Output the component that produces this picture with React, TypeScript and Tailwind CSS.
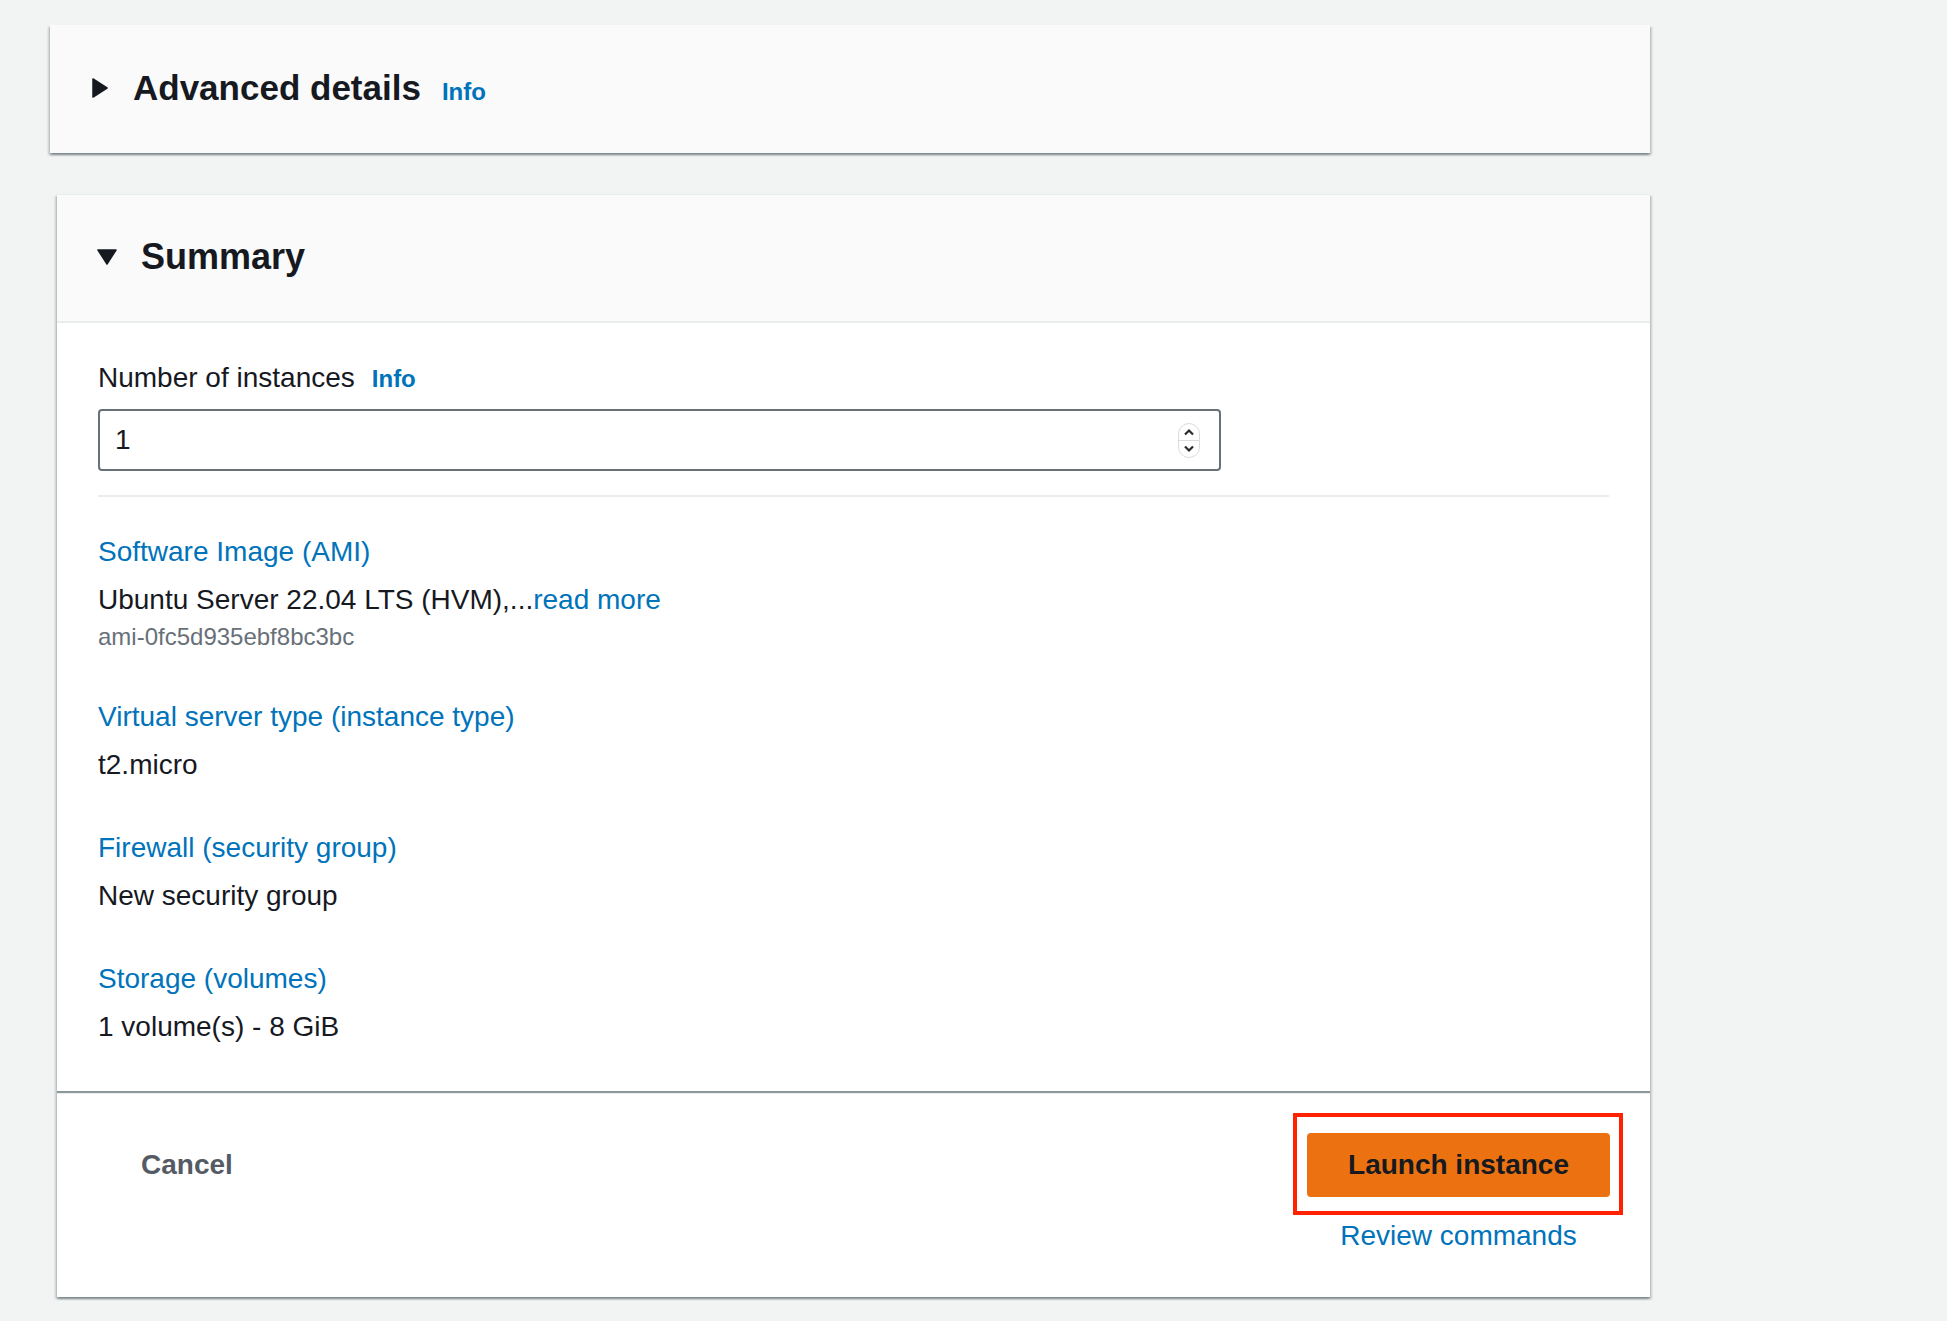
const cardShadow =
  "shadow-[0_2px_2px_0_rgba(0,28,36,0.3),2px_2px_2px_0_rgba(0,28,36,0.15),-2px_2px_2px_0_rgba(0,28,36,0.15)]";

function CaretRight() {
  return (
    <svg width="16" height="20" viewBox="0 0 16 20" className="shrink-0">
      <polygon points="1,1 15,10 1,19" fill="#16191f" stroke="#16191f" strokeWidth="1.5" strokeLinejoin="round" />
    </svg>
  );
}

function CaretDown() {
  return (
    <svg width="20" height="16" viewBox="0 0 20 16" className="shrink-0">
      <polygon points="1,1 19,1 10,15" fill="#16191f" stroke="#16191f" strokeWidth="1.5" strokeLinejoin="round" />
    </svg>
  );
}

function Spinner() {
  return (
    <div className="w-[22px] h-[35px] rounded-[11px] border border-[#dcdcdc] flex flex-col overflow-hidden">
      <div className="flex-1 flex items-center justify-center border-b border-[#dcdcdc]">
        <svg width="12" height="8" viewBox="0 0 12 8">
          <polyline points="2,6.5 6,2.5 10,6.5" fill="none" stroke="#2a2a2a" strokeWidth="2.2" />
        </svg>
      </div>
      <div className="flex-1 flex items-center justify-center">
        <svg width="12" height="8" viewBox="0 0 12 8">
          <polyline points="2,1.5 6,5.5 10,1.5" fill="none" stroke="#2a2a2a" strokeWidth="2.2" />
        </svg>
      </div>
    </div>
  );
}

type Item = { label: string; value: React.ReactNode; sub?: string };

const items: Item[] = [
  {
    label: "Software Image (AMI)",
    value: (
      <>
        Ubuntu Server 22.04 LTS (HVM),...
        <span className="text-[#0073bb]">read more</span>
      </>
    ),
    sub: "ami-0fc5d935ebf8bc3bc",
  },
  { label: "Virtual server type (instance type)", value: "t2.micro" },
  { label: "Firewall (security group)", value: "New security group" },
  { label: "Storage (volumes)", value: "1 volume(s) - 8 GiB" },
];

export default function App() {
  return (
    <div className="min-h-screen w-full bg-[#f2f3f3] pt-[25px] pb-[25px] font-['Liberation_Sans',Arial,sans-serif] text-[#16191f]">
      {/* Advanced details */}
      <div className={`ml-[50px] w-[1600px] bg-[#fafafa] ${cardShadow}`}>
        <div className="h-[128px] pb-[3px] pl-[42px] flex items-center gap-[25px]">
          <CaretRight />
          <div className="flex items-baseline gap-[21px]">
            <h2 className="text-[35px] leading-[44px] font-bold">Advanced details</h2>
            <span className="text-[24px] font-bold text-[#0073bb]">Info</span>
          </div>
        </div>
      </div>

      {/* Summary */}
      <div className={`ml-[57px] mt-[41px] w-[1593px] bg-white border-t border-[#eaeded] ${cardShadow}`}>
        <div className="h-[128px] pb-[3px] pl-[40px] flex items-center gap-[24px] bg-[#fafafa] border-b-2 border-[#eaeded]">
          <CaretDown />
          <h2 className="text-[36px] leading-[44px] font-bold">Summary</h2>
        </div>

        <div className="px-[41px] pt-[37px] pb-[46px] border-b-2 border-[#8d9899]">
          <div className="flex items-baseline gap-[17px]">
            <span className="text-[28px] leading-[36px]">Number of instances</span>
            <span className="text-[24px] font-bold text-[#0073bb]">Info</span>
          </div>
          <div className="mt-[12px] w-[1123px] h-[62px] border-2 border-[#687078] rounded-[4px] flex items-center justify-between pl-[15px] pr-[19px]">
            <span className="text-[28px]">1</span>
            <Spinner />
          </div>
          <div className="mt-[24px] h-[2px] bg-[#eaeded]" />

          <div className="mt-[37px] flex flex-col gap-[47px]">
            {items.map((item) => (
              <div key={item.label}>
                <div className="text-[28px] leading-[36px] text-[#0073bb]">{item.label}</div>
                <div className="mt-[12px] text-[28px] leading-[36px]">{item.value}</div>
                {item.sub && (
                  <div className="mt-[4px] text-[24px] leading-[30px] text-[#687078]">{item.sub}</div>
                )}
              </div>
            ))}
          </div>
        </div>

        <div className="border-t border-[#eaeded] flex justify-between items-start pt-[39px] pb-[43px] pl-[40px] pr-[40px]">
          <button className="h-[64px] px-[44px] flex items-center text-[28px] font-bold text-[#545b64]">
            Cancel
          </button>
          <div className="flex flex-col items-center">
            <div className="relative">
              <button className="w-[303px] h-[64px] rounded-[4px] bg-[#ec7211] text-[28px] font-bold text-[#16191f]">
                Launch instance
              </button>
              <div className="absolute -left-[14px] -right-[13px] -top-[20px] -bottom-[18px] border-4 border-[#ff2200] pointer-events-none" />
            </div>
            <span className="mt-[21px] text-[28px] leading-[36px] text-[#0073bb]">Review commands</span>
          </div>
        </div>
      </div>
    </div>
  );
}
